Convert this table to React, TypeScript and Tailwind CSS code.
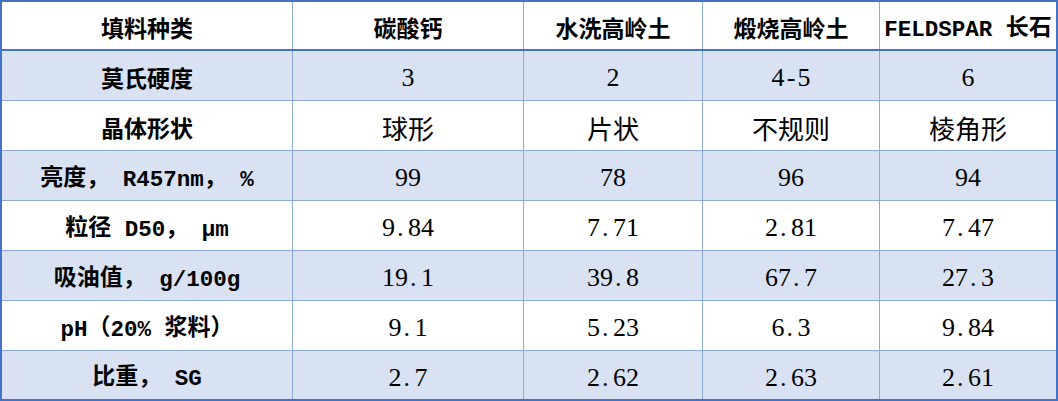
import type { ReactNode } from "react";

type Row = {
  label: ReactNode;
  values: string[];
};

// Latin bits inside the bold CJK labels
const L = ({ children }: { children: ReactNode }) => (
  <span className="font-['Liberation_Mono',monospace] text-[22.5px] align-[-1px]">{children}</span>
);

// numbers drawn half-width like the source font
const Num = ({ v }: { v: string }) => (
  <span className="font-['Liberation_Serif',serif]">
    {v.split("").map((c, i) =>
      c === "." ? (
        <span key={i} className="inline-block w-[0.5em] pl-[0.08em] text-left">
          .
        </span>
      ) : c === "-" ? (
        <span key={i} className="inline-block w-[0.5em] text-center">
          -
        </span>
      ) : (
        <span key={i}>{c}</span>
      )
    )}
  </span>
);

const rows: Row[] = [
  { label: "莫氏硬度", values: ["3", "2", "4-5", "6"] },
  { label: "晶体形状", values: ["球形", "片状", "不规则", "棱角形"] },
  {
    label: (
      <>
        亮度，<L> R457nm</L>，<L> %</L>
      </>
    ),
    values: ["99", "78", "96", "94"],
  },
  {
    label: (
      <>
        粒径<L> D50</L>，<L> μm</L>
      </>
    ),
    values: ["9.84", "7.71", "2.81", "7.47"],
  },
  {
    label: (
      <>
        吸油值，<L> g/100g</L>
      </>
    ),
    values: ["19.1", "39.8", "67.7", "27.3"],
  },
  {
    label: (
      <>
        <L>pH</L>（<L>20% </L>浆料）
      </>
    ),
    values: ["9.1", "5.23", "6.3", "9.84"],
  },
  {
    label: (
      <>
        比重，<L> SG</L>
      </>
    ),
    values: ["2.7", "2.62", "2.63", "2.61"],
  },
];

const headers = ["碳酸钙", "水洗高岭土", "煅烧高岭土"];

const cols = "grid grid-cols-[290px_230px_178px_176px_176px] gap-x-px bg-[#8eaadb]";

export default function App() {
  return (
    <div className="w-[1058px] h-[401px] bg-white">
      <div className="flex flex-col border-2 border-[#4472c4] text-black font-['Noto_Sans_CJK_SC',sans-serif]">
        <div className={`${cols} h-[49px] border-b-2 border-[#4472c4]`}>
          <div className="flex items-center justify-center bg-white pt-1 text-[23px] font-bold">
            填料种类
          </div>
          {headers.map((h) => (
            <div
              key={h}
              className="flex items-center justify-center bg-white pt-1 text-[23px] font-bold"
            >
              {h}
            </div>
          ))}
          <div className="flex items-center justify-center bg-white pt-1 text-[23px] font-bold whitespace-pre">
            <span>
              <L>FELDSPAR </L>长石
            </span>
          </div>
        </div>
        <div className={`${cols} gap-y-px grid-rows-[repeat(6,49px)_48px]`}>
          {rows.map((r, ri) => {
            const bg = ri % 2 === 0 ? "bg-[#d9e2f3]" : "bg-white";
            return [
              <div
                key={`l${ri}`}
                className={`${bg} flex items-center justify-center pt-1 text-[23px] font-bold whitespace-pre`}
              >
                <span>{r.label}</span>
              </div>,
              ...r.values.map((v, ci) => (
                <div
                  key={`${ri}-${ci}`}
                  className={`${bg} flex items-center justify-center pt-1 text-[26px]`}
                >
                  {/[0-9]/.test(v) ? <Num v={v} /> : v}
                </div>
              )),
            ];
          })}
        </div>
      </div>
    </div>
  );
}
